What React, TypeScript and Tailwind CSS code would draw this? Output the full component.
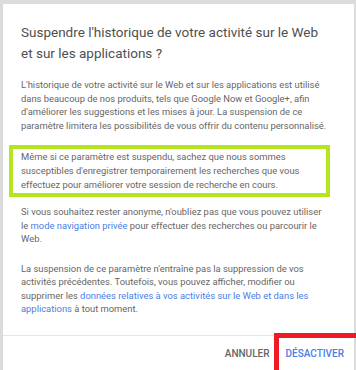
export default function App() {
  return (
    <div
      className="relative w-[356px] h-[370px] overflow-hidden bg-[#dcdcdc] pt-[4px] pl-[3px] pr-[2px]"
      style={{ fontFamily: "Roboto, 'Liberation Sans', sans-serif" }}
    >
      <div className="flex h-[400px] flex-col bg-white">
        <div className="px-[18px] pt-[18px]">
          <h1 className="whitespace-nowrap text-[13.5px] leading-[21px] font-normal text-[#505050]">
            Suspendre l'historique de votre activité sur le Web
            <br />
            et sur les applications ?
          </h1>

          <p className="mt-[14px] whitespace-nowrap text-[9.4px] leading-[13.6px] text-[#666]">
            L'historique de votre activité sur le Web et sur les applications est utilisé
            <br />
            dans beaucoup de nos produits, tels que Google Now et Google+, afin
            <br />
            d'améliorer les suggestions et les mises à jour. La suspension de ce
            <br />
            paramètre limitera les possibilités de vous offrir du contenu personnalisé.
          </p>

          {/* highlighted paragraph */}
          <div className="mt-[13px] -ml-[12px] w-[321px] border-4 border-[#b5e61d] pl-[8px] pt-[1px] pb-[2px]">
            <p className="whitespace-nowrap text-[9.4px] leading-[13.6px] text-[#666]">
              Même si ce paramètre est suspendu, sachez que nous sommes
              <br />
              susceptibles d'enregistrer temporairement les recherches que vous
              <br />
              effectuez pour améliorer votre session de recherche en cours.
            </p>
          </div>

          <p className="mt-[8px] whitespace-nowrap text-[9.4px] leading-[13.6px] text-[#666]">
            Si vous souhaitez rester anonyme, n'oubliez pas que vous pouvez utiliser
            <br />
            le <span className="text-[#4a7ee8]">mode navigation privée</span> pour effectuer des recherches ou parcourir le
            <br />
            Web.
          </p>

          <p className="mt-[15.6px] whitespace-nowrap text-[9.4px] leading-[13.6px] text-[#666]">
            La suspension de ce paramètre n'entraîne pas la suppression de vos
            <br />
            activités précédentes. Toutefois, vous pouvez afficher, modifier ou
            <br />
            supprimer les <span className="text-[#4a7ee8]">données relatives à vos activités sur le Web et dans les</span>
            <br />
            <span className="text-[#4a7ee8]">applications</span> à tout moment.
          </p>
        </div>

        <div className="mt-[19px] border-t border-[#e6e6e6]">
          <div className="flex justify-end gap-[16px] pr-[10px] pt-[11px]">
            <button className="text-[10px] leading-[14px] font-medium text-[#666]">ANNULER</button>
            <button className="text-[10px] leading-[14px] font-medium text-[#4a7ee8]">DÉSACTIVER</button>
          </div>
        </div>
      </div>

      {/* red annotation box */}
      <div className="absolute left-[274px] top-[333px] h-[50px] w-[90px] border-[5px] border-[#ed1c24]" />
    </div>
  );
}
